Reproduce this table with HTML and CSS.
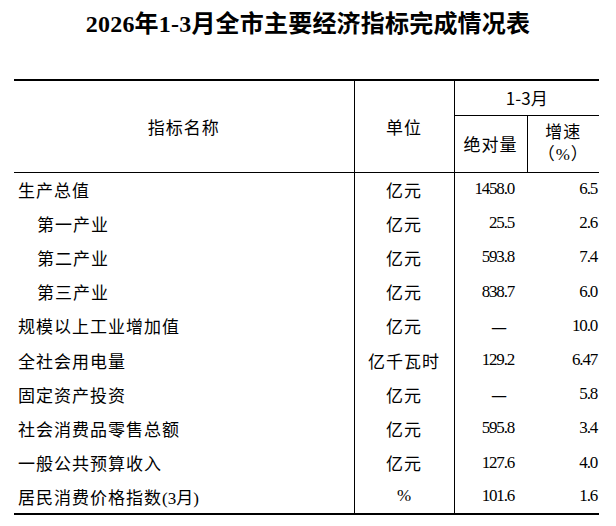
FILE: index.html
```html
<!DOCTYPE html>
<html lang="zh-CN">
<head>
<meta charset="utf-8">
<title>2026年1-3月全市主要经济指标完成情况表</title>
<link rel="stylesheet" href="styles.css">
</head>
<body>
<h1 class="title">2026年1-3月全市主要经济指标完成情况表</h1>
<table class="stats">
  <colgroup>
    <col class="c-name"><col class="c-unit"><col class="c-abs"><col class="c-rate">
  </colgroup>
  <thead>
    <tr class="h1">
      <th rowspan="2" class="h-name">指标名称</th>
      <th rowspan="2" class="h-unit">单位</th>
      <th colspan="2" class="h-period">1-3月</th>
    </tr>
    <tr class="h2">
      <th class="h-abs">绝对量</th>
      <th class="h-rate">增速<br>（%）</th>
    </tr>
  </thead>
  <tbody>
    <tr><td class="name">生产总值</td><td class="unit">亿元</td><td class="abs">1458.0</td><td class="rate">6.5</td></tr>
    <tr><td class="name sub">第一产业</td><td class="unit">亿元</td><td class="abs">25.5</td><td class="rate">2.6</td></tr>
    <tr><td class="name sub">第二产业</td><td class="unit">亿元</td><td class="abs">593.8</td><td class="rate">7.4</td></tr>
    <tr><td class="name sub">第三产业</td><td class="unit">亿元</td><td class="abs">838.7</td><td class="rate">6.0</td></tr>
    <tr><td class="name">规模以上工业增加值</td><td class="unit">亿元</td><td class="abs dash">—</td><td class="rate">10.0</td></tr>
    <tr><td class="name">全社会用电量</td><td class="unit">亿千瓦时</td><td class="abs">129.2</td><td class="rate">6.47</td></tr>
    <tr><td class="name">固定资产投资</td><td class="unit">亿元</td><td class="abs dash">—</td><td class="rate">5.8</td></tr>
    <tr><td class="name">社会消费品零售总额</td><td class="unit">亿元</td><td class="abs">595.8</td><td class="rate">3.4</td></tr>
    <tr><td class="name">一般公共预算收入</td><td class="unit">亿元</td><td class="abs">127.6</td><td class="rate">4.0</td></tr>
    <tr><td class="name">居民消费价格指数<span class="paren">(3月)</span></td><td class="unit pct">%</td><td class="abs">101.6</td><td class="rate">1.6</td></tr>
  </tbody>
</table>
</body>
</html>
```

FILE: styles.css
```css
html, body {
  margin: 0;
  padding: 0;
  background: #fff;
  color: #000;
}

body {
  font-family: "Liberation Serif", "Noto Sans CJK SC", serif;
}

.title {
  margin: 0;
  padding-top: 8px;
  height: 32px;
  line-height: 32px;
  font-size: 24px;
  font-weight: bold;
  text-align: center;
  letter-spacing: 0.2px;
}

.stats {
  margin-top: 39px;
  margin-left: 14px;
  width: 585px;
  border-collapse: collapse;
  table-layout: fixed;
  font-size: 17px;
  letter-spacing: 1px;
}

.c-name { width: 340px; }
.c-unit { width: 100px; }
.c-abs  { width: 73px; }
.c-rate { width: 72px; }

.stats th,
.stats td {
  padding: 0;
  font-weight: normal;
  vertical-align: middle;
  white-space: nowrap;
}

.stats thead tr.h1 th {
  border-top: 2px solid #000;
}

.stats .h1 { height: 35px; }
.stats .h2 { height: 57px; }

.h-name { text-align: center; }
.h-unit { text-align: center; border-left: 1px solid #000; }
.h-period {
  text-align: center;
  border-left: 1px solid #000;
  border-bottom: 1px solid #000;
  font-family: "Noto Sans CJK SC", sans-serif;
  letter-spacing: 0;
}
.h-abs { text-align: center; border-left: 1px solid #000; }
.h-rate { text-align: center; border-left: 1px solid #000; line-height: 22px; }

.stats thead tr.h2 th,
.stats thead .h-name,
.stats thead .h-unit {
  border-bottom: 1px solid #000;
}

.stats tbody tr { height: 34.2px; }
.stats tbody tr:last-child td { border-bottom: 2px solid #000; }

.name {
  padding-left: 4px !important;
  text-align: left;
}
.name.sub { padding-left: 23px !important; }

.paren { letter-spacing: 0; }

.unit {
  text-align: center;
  border-left: 1px solid #000;
}
.unit.pct { letter-spacing: 0; }

.abs {
  text-align: right;
  padding-right: 13px !important;
  border-left: 1px solid #000;
  font-size: 17px;
  letter-spacing: -1.2px;
}
.abs.dash {
  font-family: "Noto Sans CJK SC", sans-serif;
  font-size: 18px;
  letter-spacing: 0;
  padding-right: 20px !important;
}

.rate {
  text-align: right;
  padding-right: 2px !important;
  font-size: 17px;
  letter-spacing: -1.2px;
}
```
